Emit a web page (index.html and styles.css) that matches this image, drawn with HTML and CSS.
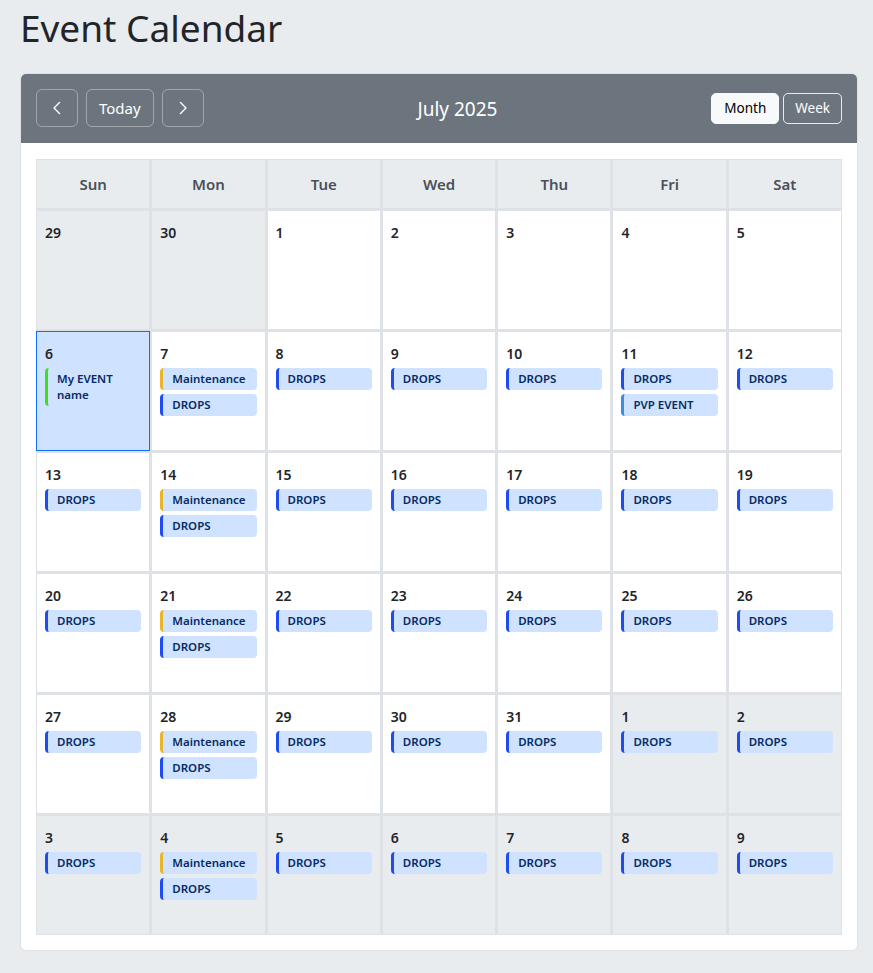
FILE: index.html
```html
<!DOCTYPE html>
<html lang="en">
<head>
<meta charset="UTF-8">
<meta name="viewport" content="width=device-width, initial-scale=1.0">
<title>Event Calendar</title>
<link rel="stylesheet" href="styles.css">
</head>
<body>

<div class="page">
<h1 class="title">Event Calendar</h1>

<div class="card">
    <div class="card-header">
        <div class="nav">
            <button class="btn-outline icon-btn" aria-label="Previous">
                <svg width="16" height="16" viewBox="0 0 16 16"><polyline points="10.5,2.5 5,8 10.5,13.5" fill="none" stroke="#fff" stroke-width="1.4" stroke-linecap="round" stroke-linejoin="round"/></svg>
            </button>
            <button class="btn-outline">Today</button>
            <button class="btn-outline icon-btn" aria-label="Next">
                <svg width="16" height="16" viewBox="0 0 16 16"><polyline points="5.5,2.5 11,8 5.5,13.5" fill="none" stroke="#fff" stroke-width="1.4" stroke-linecap="round" stroke-linejoin="round"/></svg>
            </button>
        </div>
        <div class="month-title">July 2025</div>
        <div class="views">
            <button class="view-btn active">Month</button>
            <button class="view-btn">Week</button>
        </div>
    </div>

    <div class="card-body">
        <div class="grid" id="grid">
            <div class="dow">Sun</div>
            <div class="dow">Mon</div>
            <div class="dow">Tue</div>
            <div class="dow">Wed</div>
            <div class="dow">Thu</div>
            <div class="dow">Fri</div>
            <div class="dow">Sat</div>
        </div>
    </div>
</div>
</div>

<script>
const grid = document.getElementById('grid');

// 6 weeks starting Sun 29 June
const days = [];
for (let d = 29; d <= 30; d++) days.push({ day: d, other: true });
for (let d = 1; d <= 31; d++) days.push({ day: d, other: false });
for (let d = 1; d <= 9; d++) days.push({ day: d, other: true });

days.forEach(function(item, i) {
    const cell = document.createElement('div');
    cell.className = 'day';
    if (item.other) cell.classList.add('other');

    const num = document.createElement('div');
    num.className = 'num';
    num.innerText = item.day;
    cell.appendChild(num);

    let events = [];
    if (i >= 8) {
        if (i % 7 === 1) events.push(['Maintenance', 'maint']);
        events.push(['DROPS', 'drops']);
        if (!item.other && item.day === 11) events.push(['PVP EVENT', 'pvp']);
    }
    if (i === 7) {
        cell.classList.add('selected');
        events.push(['My EVENT name', 'mine']);
    }

    events.forEach(function(ev) {
        const el = document.createElement('div');
        el.className = 'event ' + ev[1];
        el.innerText = ev[0];
        cell.appendChild(el);
    });

    grid.appendChild(cell);
});
</script>

</body>
</html>
```

FILE: styles.css
```css
body {
    margin: 0;
    background: #e9ecef;
    font-family: "Noto Sans", "Open Sans", sans-serif;
    color: #212529;
}
.page {
    padding: 4px 15px 20px 20px;
}
.title {
    font-size: 37px;
    font-weight: 400;
    line-height: 48px;
    margin: 0 0 21px;
}
.card {
    background: #fff;
    border: 1px solid #dee2e6;
    border-radius: 6px;
    overflow: hidden;
}
.card-header {
    background: #6c757d;
    padding: 15px 15px 16px;
    display: flex;
    align-items: center;
}
.nav {
    display: flex;
    gap: 8px;
}
.btn-outline {
    height: 38px;
    padding: 0 12px;
    background: transparent;
    border: 1px solid rgba(255,255,255,0.35);
    border-radius: 6px;
    color: #fff;
    font-family: inherit;
    font-size: 15px;
    cursor: pointer;
}
.icon-btn {
    width: 42px;
    padding: 0;
    display: flex;
    align-items: center;
    justify-content: center;
}
.month-title {
    flex: 1;
    text-align: center;
    color: #fff;
    font-size: 19px;
    padding-top: 2px;
}
.views {
    display: flex;
    gap: 4px;
}
.view-btn {
    height: 31px;
    padding: 0 11px;
    background: transparent;
    border: 1px solid rgba(255,255,255,0.85);
    border-radius: 5px;
    color: #fff;
    font-family: inherit;
    font-size: 13.5px;
    cursor: pointer;
}
.view-btn.active {
    background: #f8f9fa;
    border-color: #f8f9fa;
    color: #000;
    padding: 0 12px;
}
.card-body {
    padding: 16px 15px 15px 15px;
}
.grid {
    display: grid;
    grid-template-columns: repeat(7, 1fr);
    grid-template-rows: 48px repeat(6, 118px);
    gap: 3px;
    background: #dee2e6;
    border: 1px solid #dee2e6;
}
.dow {
    background: #e9ecef;
    display: flex;
    align-items: center;
    justify-content: center;
    font-size: 15px;
    font-weight: 600;
    color: #495057;
}
.day {
    background: #fff;
    padding: 11px 8px 8px;
    display: flex;
    flex-direction: column;
    gap: 4px;
    min-width: 0;
    box-sizing: border-box;
}
.day.other {
    background: #e9ecef;
}
.day.selected {
    background: #cfe2ff;
    outline: 1px solid #0d6efd;
}
.num {
    font-size: 14px;
    font-weight: 600;
    line-height: 21px;
    color: #212529;
}
.event {
    background: #cfe2ff;
    border-left: 3px solid #1f4cf2;
    border-radius: 4px;
    padding: 3px 6px 3px 9px;
    font-size: 11.5px;
    font-weight: 600;
    line-height: 16px;
    color: #052c65;
}
.event.maint {
    border-left-color: #e8b52c;
}
.event.pvp {
    border-left-color: #3a8ee2;
}
.event.mine {
    border-left-color: #3ee01c;
    background: transparent;
}
```
